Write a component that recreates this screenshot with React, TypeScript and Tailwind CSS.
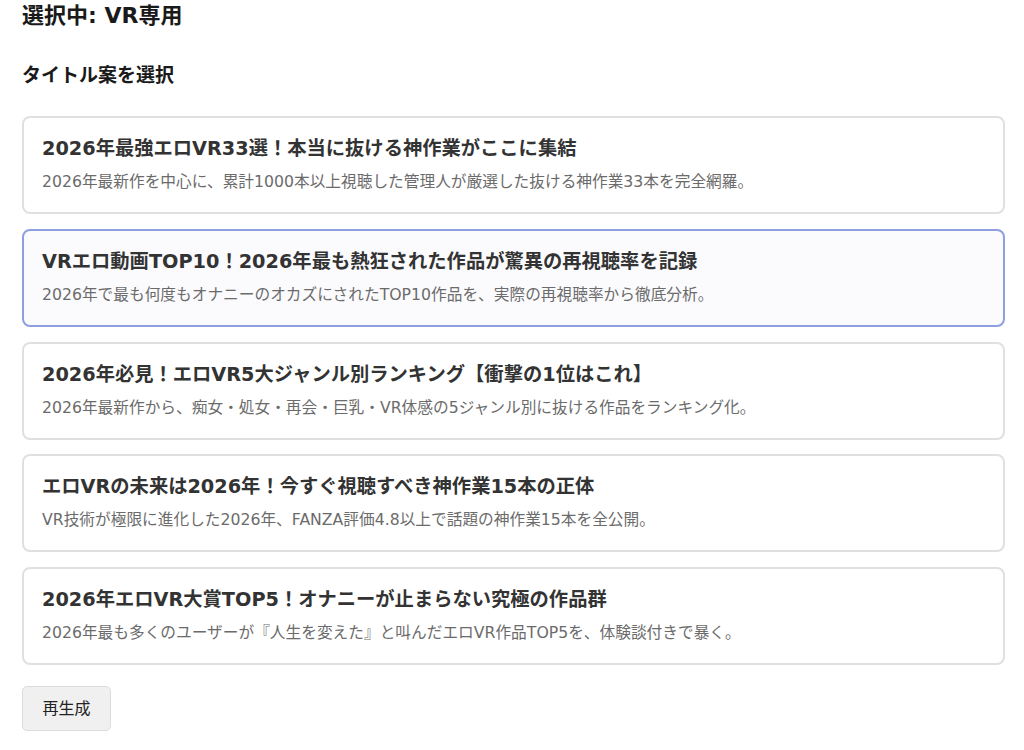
const FONT = '[font-family:"DejaVu_Sans","Noto_Sans_CJK_JP",sans-serif]';

const titles = [
  {
    title: '2026年最強エロVR33選！本当に抜ける神作業がここに集結',
    desc: '2026年最新作を中心に、累計1000本以上視聴した管理人が厳選した抜ける神作業33本を完全網羅。',
  },
  {
    title: 'VRエロ動画TOP10！2026年最も熱狂された作品が驚異の再視聴率を記録',
    desc: '2026年で最も何度もオナニーのオカズにされたTOP10作品を、実際の再視聴率から徹底分析。',
  },
  {
    title: '2026年必見！エロVR5大ジャンル別ランキング【衝撃の1位はこれ】',
    desc: '2026年最新作から、痴女・処女・再会・巨乳・VR体感の5ジャンル別に抜ける作品をランキング化。',
  },
  {
    title: 'エロVRの未来は2026年！今すぐ視聴すべき神作業15本の正体',
    desc: 'VR技術が極限に進化した2026年、FANZA評価4.8以上で話題の神作業15本を全公開。',
  },
  {
    title: '2026年エロVR大賞TOP5！オナニーが止まらない究極の作品群',
    desc: '2026年最も多くのユーザーが『人生を変えた』と叫んだエロVR作品TOP5を、体験談付きで暴く。',
  },
];

export default function App() {
  const selected = 1;

  return (
    <div className={`${FONT} min-h-[750px] bg-white pl-[22px] pt-[1px] text-[#222]`}>
      <h2 className="h-[30px] text-[22px] font-bold leading-[30px] text-[#1a1a1a]">選択中: VR専用</h2>
      <h3 className="mt-[31px] h-[26px] text-[19px] font-bold leading-[26px] text-[#1a1a1a]">タイトル案を選択</h3>

      <div className="mt-[28px] flex w-[983px] flex-col gap-[14.75px]">
        {titles.map((t, i) => (
          <div
            key={i}
            className={
              i === selected
                ? 'cursor-pointer rounded-lg border-2 border-[#8e9fe0] bg-[#fbfbfe] px-[18px] py-[18px]'
                : 'cursor-pointer rounded-lg border-2 border-[#e0e0e0] bg-white px-[18px] py-[18px]'
            }
          >
            <div className="h-[26px] text-[19.3px] font-bold leading-[26px] text-[#333]">{t.title}</div>
            <div className="mt-[8px] h-[24px] text-[15.7px] leading-[24px] text-[#6b6b6b]">{t.desc}</div>
          </div>
        ))}
      </div>

      <button className="mt-[21px] h-[45px] w-[89px] rounded-[5px] border border-[#dcdcdc] bg-[#f0f0f0] text-[16px] text-[#222]">
        再生成
      </button>
    </div>
  );
}
